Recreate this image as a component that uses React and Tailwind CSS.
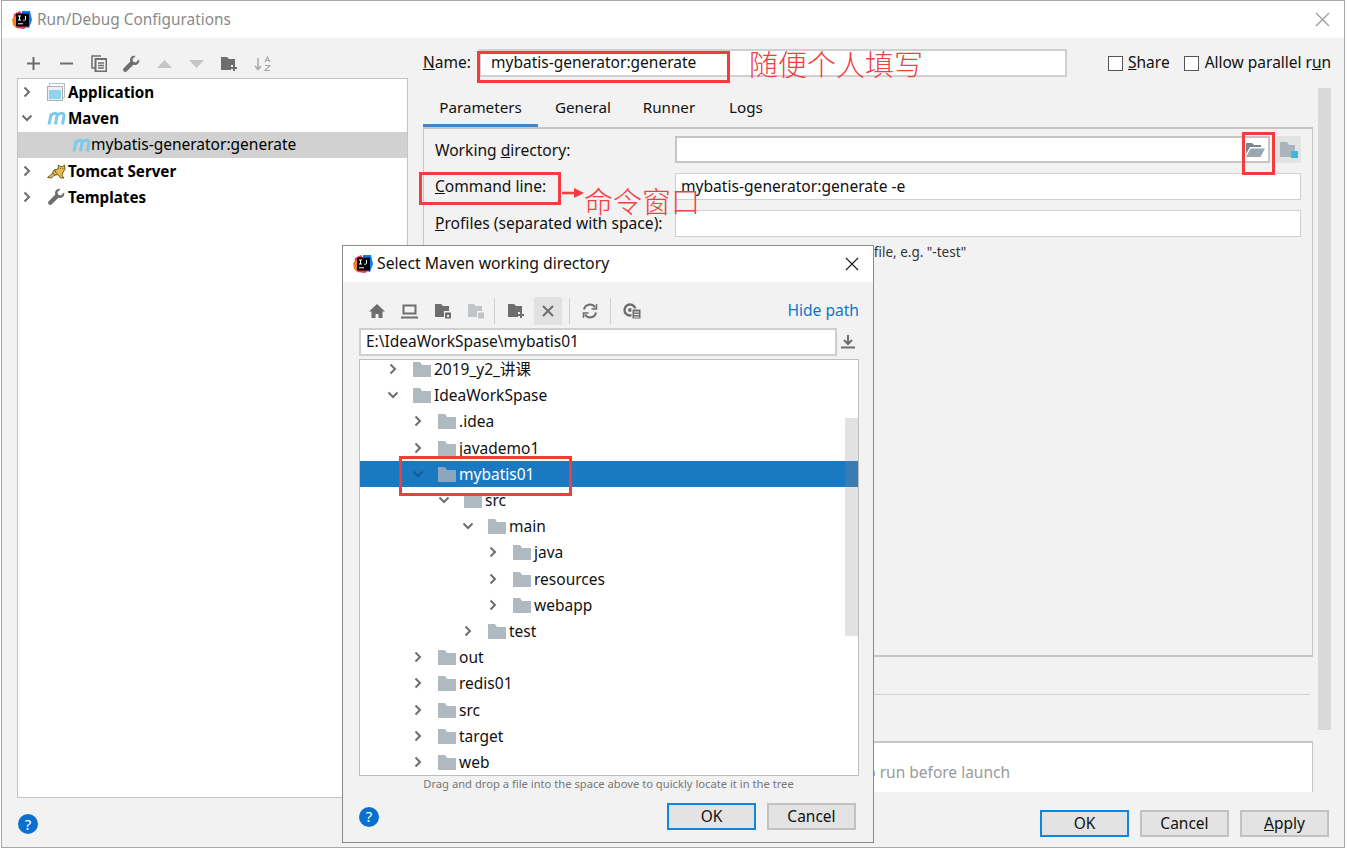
const Chevron = ({ open, color = "#6e6e6e", className = "" }) => (
    <svg width="12" height="12" viewBox="0 0 12 12" fill="none" stroke={color} strokeWidth="2" className={className}>
        {open ? <path d="M1.500 3.500 6 8l4.500-4.500" /> : <path d="M3.500 1.500 8 6l-4.500 4.500" />}
    </svg>
)

const Folder = ({ dim }) => (
    <svg width="18" height="16" viewBox="0 0 18 16" className="shrink-0">
        <path d="M0 1h7l2 3h9v12H0z" fill={dim ? "#8ba6bd" : "#afb9c0"} />
    </svg>
)

const IdeaLogo = () => (
    <svg width="20" height="20" viewBox="0 0 20 20" className="shrink-0">
        <path d="M2 4 8 1l3 5-6 9-4-3z" fill="#f0325f" />
        <path d="M0 9l4-3 3 8-3 4-3-3z" fill="#fc801d" />
        <path d="M10 1h8l2 9-3 8-8-2z" fill="#087cfa" />
        <path d="M4 18l8 1 4-3-6-4z" fill="#f0325f" />
        <rect x="4" y="3.500" width="13" height="13" fill="#000" />
        <path d="M6 6h3M7.500 6v4M6 10h3M13.500 6v3.500q0 .7-.8.7h-1.500M6 13.800h5" stroke="#fff" strokeWidth="1" fill="none" />
    </svg>
)

const MavenIcon = () => (
    <svg width="19" height="14" viewBox="0 0 19 14" fill="none" stroke="#7cc9ea" strokeWidth="3" className="shrink-0">
        <path d="M2 13.500 4.300 2.500M3.800 5C6 1.500 10.500 1.500 10 4.500L8.500 13.500M10 5c2.200-3.500 7.500-3.500 7-.5L15.500 13.500" />
    </svg>
)

const Wrench = ({ size = 18, color = "#6e6e6e" }) => (
    <svg width={size} height={size} viewBox="0 0 18 18" className="shrink-0">
        <path d="M17 4.500 13.800 7.600l-2.600-.8-.8-2.600L13.500 1C10.800.2 8 2.200 8 5c0 .6.100 1.100.3 1.600L1 14l.600 2.400 2.400.6 7.400-7.300c3.600 1.200 7-2.100 5.600-5.700z" fill={color} />
    </svg>
)

const Tomcat = () => (
    <svg width="19" height="15" viewBox="0 0 19 15" className="shrink-0">
        <path d="M.5 13.500 5 10l2-4 4-1 .5-4 2 1.500h2l2-1.500.5 4-2 3.500-1 3 2 2.500h-3.500L11 10.500l-4 1-2.500 2.500z" fill="#e6bb4a" stroke="#4a3c1c" strokeWidth=".8" />
        <path d="M8 6.500l1.500 3M5.500 9.500l2 1M13 4.500h.8M15.500 4.500h.8" stroke="#4a3c1c" strokeWidth=".9" />
    </svg>
)

const HelpIcon = () => (
    <div className="w-5 h-5 rounded-full bg-[#0b6fd0] flex items-center justify-center text-white text-[15px] leading-none">?</div>
)

const Btn = ({ children, primary }) => (
    <button className={`w-[89px] h-[27px] flex items-center justify-center text-[15.500px] text-[#111] bg-[#e3e3e3] border-2 ${primary ? "border-[#0f85dc]" : "border-[#c2c2c2]"}`}>
        {children}
    </button>
)

const RedBox = ({ className }) => (
    <div className={`absolute border-[3px] border-[#f53b3b] ${className}`} />
)

const ToolIcon = ({ children, className = "w-[32.700px]" }) => (
    <span className={`flex justify-center ${className}`}>{children}</span>
)

const configRows = [
    { label: "Application", bold: true },
    { label: "Maven", bold: true, open: true },
    { label: "mybatis-generator:generate", child: true },
    { label: "Tomcat Server", bold: true },
    { label: "Templates", bold: true },
]

const dirRows = [
    { name: "2019_y2_讲课", level: 0 },
    { name: "IdeaWorkSpase", level: 0, open: true },
    { name: ".idea", level: 1 },
    { name: "javademo1", level: 1 },
    { name: "mybatis01", level: 1, open: true, selected: true },
    { name: "src", level: 2, open: true },
    { name: "main", level: 3, open: true },
    { name: "java", level: 4 },
    { name: "resources", level: 4 },
    { name: "webapp", level: 4 },
    { name: "test", level: 3 },
    { name: "out", level: 1 },
    { name: "redis01", level: 1 },
    { name: "src", level: 1 },
    { name: "target", level: 1 },
    { name: "web", level: 1 },
]

const levelPad = ["pl-[27px]", "pl-[52px]", "pl-[78px]", "pl-[102px]", "pl-[127px]"]

function ConfigIcon({ label }) {
    if (label === "Application") {
        return (
            <svg width="18" height="18" viewBox="0 0 18 18" className="shrink-0">
                <rect x="2.500" y=".5" width="15" height="14" fill="none" stroke="#b8bec2" />
                <rect x=".5" y="3.500" width="15" height="14" fill="#eef0f1" stroke="#a8afb4" />
                <rect x="2" y="7" width="12" height="9" fill="#8fd3ef" />
            </svg>
        )
    }
    if (label === "Tomcat Server") return <Tomcat />
    if (label === "Templates") return <Wrench />
    return <MavenIcon />
}

function Dialog() {
    return (
        <div className="absolute left-[342px] top-[245px] w-[532px] h-[598px] bg-[#f2f2f2] border border-[#8a8a8a] flex flex-col">
            <div className="h-[36px] bg-white flex items-center pl-[10px] pr-[14px] pb-[1px] gap-[4px] text-[15.750px] text-[#111]">
                <IdeaLogo />
                <span className="flex-1">Select Maven working directory</span>
                <svg width="14" height="14" viewBox="0 0 14 14" stroke="#222" strokeWidth="1.200"><path d="M1 1l12 12M13 1 1 13" /></svg>
            </div>
            <div className="h-[46px] pt-[12px] pl-[17px] pr-[14px] flex items-center">
                <ToolIcon className="w-[33px]">
                    <svg width="18" height="16" viewBox="0 0 18 16"><path d="M9 1 1 8.500h2.500V15h4v-4h3v4h4V8.500H17z" fill="#6e6e6e" /></svg>
                </ToolIcon>
                <ToolIcon className="w-[33px]">
                    <svg width="17" height="15" viewBox="0 0 17 15" fill="none" stroke="#6e6e6e" strokeWidth="2"><path d="M2.500 1.500h12v8h-12zM0 13.500h17" /></svg>
                </ToolIcon>
                <ToolIcon className="w-[33px]">
                    <svg width="18" height="16" viewBox="0 0 18 16"><path d="M1 1h6l2 2h6v5h-5v6H1z" fill="#6e6e6e" /><path d="M11 9.500h6v6h-6z" fill="#6e6e6e" /><path d="M13 12h2v2h-2z" fill="#f2f2f2" /></svg>
                </ToolIcon>
                <ToolIcon className="w-[33px]">
                    <svg width="18" height="16" viewBox="0 0 18 16"><path d="M1 1h6l2 2h6v5h-5v6H1z" fill="#c2c5c7" /><path d="M11 9.500h6v6h-6z" fill="#c2c5c7" /></svg>
                </ToolIcon>
                <span className="w-px h-[26px] bg-[#cfcfcf] ml-[2px] mr-[3px]" />
                <ToolIcon className="w-[36px]">
                    <svg width="18" height="16" viewBox="0 0 18 16"><path d="M1 1h6l2 2h6v6h-4v5H1z" fill="#6e6e6e" /><path d="M14 9v6M11 12h6" stroke="#6e6e6e" strokeWidth="2" /></svg>
                </ToolIcon>
                <span className="w-[28px] h-[28px] bg-[#e1e1e1] flex items-center justify-center">
                    <svg width="12" height="12" viewBox="0 0 12 12" stroke="#6e6e6e" strokeWidth="2"><path d="M1 1l10 10M11 1 1 11" /></svg>
                </span>
                <span className="w-px h-[26px] bg-[#cfcfcf] ml-[7px]" />
                <ToolIcon className="w-[40px]">
                    <svg width="16" height="16" viewBox="0 0 16 16" fill="none" stroke="#6e6e6e" strokeWidth="2"><path d="M2 6.500A6 6 0 0 1 13 4.500M14 9.500A6 6 0 0 1 3 11.500" /><path d="M14.500 1v5h-5M1.500 15v-5h5" strokeWidth="1.500" /></svg>
                </ToolIcon>
                <span className="w-px h-[26px] bg-[#cfcfcf]" />
                <ToolIcon className="w-[42px]">
                    <svg width="20" height="18" viewBox="0 0 20 18"><circle cx="8" cy="8" r="5.500" fill="none" stroke="#6e6e6e" strokeWidth="2.400" /><circle cx="8" cy="8" r="2" fill="#6e6e6e" /><path d="M10 7h9v10h-9z" fill="#6e6e6e" stroke="#f2f2f2" /><path d="M12 10h5M12 12.500h5M12 15h5" stroke="#f2f2f2" /></svg>
                </ToolIcon>
                <span className="ml-auto text-[15.600px] text-[#0f76c6]">Hide path</span>
            </div>
            <div className="flex items-center pl-[16px] pr-[15px] mt-[-1px] h-[29px]">
                <div className="w-[478px] h-[28px] bg-white border-2 border-[#cfcfcf] flex items-center pl-[5px] text-[15.500px] text-[#111]">E:\IdeaWorkSpase\mybatis01</div>
                <svg width="14" height="15" viewBox="0 0 14 15" className="ml-[4px]"><path d="M7 1v8M3 6l4 4 4-4" fill="none" stroke="#6e6e6e" strokeWidth="2" /><path d="M0 13.500h14" stroke="#6e6e6e" strokeWidth="2" /></svg>
            </div>
            <div className="relative ml-[16px] mt-[3px] w-[500px] h-[417px] bg-white border border-[#bfbfbf] overflow-hidden">
                <div className="mt-[-4px]">
                    {dirRows.map((row) => (
                        <div key={row.name + row.level} className={`h-[26.200px] flex items-center gap-[5px] text-[15.500px] leading-[18px] ${levelPad[row.level]} ${row.selected ? "bg-[#1b79c2] text-white" : "text-[#111]"}`}>
                            <Chevron open={row.open} color={row.selected ? "#165a90" : "#6e6e6e"} className="mr-[9px] shrink-0" />
                            <Folder dim={row.selected} />
                            <span className="ml-[-2px]">{row.name}</span>
                        </div>
                    ))}
                </div>
                <div className="absolute right-0 top-[58px] w-[13px] h-[218px] bg-[#8c8c8c]/25" />
            </div>
            <div className="text-[11.200px] text-[#777] text-center h-[24px] leading-[15px] pl-[1px]">Drag and drop a file into the space above to quickly locate it in the tree</div>
            <div className="flex items-center gap-[11px] pl-[16px] pr-[17px] pt-[3px]">
                <HelpIcon />
                <div className="ml-auto"><Btn primary>OK</Btn></div>
                <Btn>Cancel</Btn>
            </div>
        </div>
    )
}

export default function App() {
    return (
        <div className="relative w-[1348px] h-[850px] bg-white overflow-hidden" style={{ fontFamily: '"Noto Sans", "Noto Sans CJK SC", sans-serif' }}>
            <div className="ml-px w-[1344px] h-[848px] bg-[#f2f2f2] border border-[#a8a8a8] flex flex-col">
                <div className="h-[37px] bg-white flex items-center pl-[10px] pr-[14px] gap-[5px] text-[15.400px] text-[#8a8a8a]">
                    <IdeaLogo />
                    <span className="flex-1">Run/Debug Configurations</span>
                    <svg width="15" height="15" viewBox="0 0 15 15" stroke="#999" strokeWidth="1.200"><path d="M1 1l13 13M14 1 1 14" /></svg>
                </div>
                <div className="flex flex-1">
                    <div className="w-[406px] pl-[15px] flex flex-col">
                        <div className="h-[40px] pt-[11px] flex items-center">
                            <ToolIcon>
                                <svg width="13" height="13" viewBox="0 0 13 13" stroke="#6e6e6e" strokeWidth="2"><path d="M6.500 0v13M0 6.500h13" /></svg>
                            </ToolIcon>
                            <ToolIcon>
                                <svg width="13" height="13" viewBox="0 0 13 13" stroke="#6e6e6e" strokeWidth="2"><path d="M0 6.500h13" /></svg>
                            </ToolIcon>
                            <ToolIcon>
                                <svg width="16" height="17" viewBox="0 0 16 17" fill="none" stroke="#6e6e6e" strokeWidth="1.500"><path d="M10 1H1v12h3" /><path d="M4.500 4h11v12.500h-11z" strokeWidth="2" /><path d="M7 8h6M7 10.500h6M7 13h6" /></svg>
                            </ToolIcon>
                            <ToolIcon><Wrench /></ToolIcon>
                            <ToolIcon>
                                <svg width="15" height="8" viewBox="0 0 15 8"><path d="M7.500 0 15 8H0z" fill="#c2c5c7" /></svg>
                            </ToolIcon>
                            <ToolIcon>
                                <svg width="15" height="8" viewBox="0 0 15 8"><path d="M0 0h15L7.500 8z" fill="#c2c5c7" /></svg>
                            </ToolIcon>
                            <ToolIcon>
                                <svg width="18" height="16" viewBox="0 0 18 16"><path d="M1 1h6l2 2h6v6h-4v5H1z" fill="#6e6e6e" /><path d="M14 9v6M11 12h6" stroke="#6e6e6e" strokeWidth="2" /></svg>
                            </ToolIcon>
                            <ToolIcon>
                                <svg width="17" height="17" viewBox="0 0 17 17" fill="none" stroke="#a6aaad" strokeWidth="1.500"><path d="M4 3v11M1 11l3 3.500L7 11" /><path d="M11 7l2.500-5L16 7M11.500 5.500h4M11 10.500h5L11 15.500h5" strokeWidth="1.200" /></svg>
                            </ToolIcon>
                        </div>
                        <div className="h-[720px] bg-white border border-[#c4c4c4]">
                            {configRows.map((row) => (
                                <div key={row.label} className={`h-[26.300px] flex items-center text-black ${row.child ? "bg-[#d1d1d1] pl-[54px] text-[15.500px]" : "pl-[3px] text-[15.200px]"}`}>
                                    {!row.child && <Chevron open={row.open} className="mr-[14px] shrink-0" />}
                                    <span className={row.child ? "w-[19px]" : "w-[21px]"}><ConfigIcon label={row.label} /></span>
                                    <span className={row.bold ? "font-bold" : ""}>{row.label}</span>
                                </div>
                            ))}
                        </div>
                        <div className="pt-[16px] pl-[1px]"><HelpIcon /></div>
                    </div>
                    <div className="flex-1 pl-[15px] flex flex-col">
                        <div className="h-[50px] flex items-center text-[15.500px] text-[#111]">
                            <span className="w-[56px]"><u>N</u>ame:</span>
                            <div className="w-[588px] h-[28px] bg-white border-2 border-[#d0d0d0] flex items-center pl-[10px]">mybatis-generator:generate</div>
                            <span className="w-[15px] h-[15px] bg-white border border-[#555] ml-[41px] mr-[5px]" />
                            <span><u>S</u>hare</span>
                            <span className="w-[15px] h-[15px] bg-white border border-[#555] ml-[14px] mr-[6px]" />
                            <span>Allow parallel r<u>u</u>n</span>
                        </div>
                        <div className="flex flex-1">
                            <div className="w-[890px] flex flex-col">
                                <div className="h-[39px] flex text-[15.200px] text-[#111]">
                                    <span className="w-[115px] flex items-center justify-center border-b-[3px] border-[#4083c9] pt-[2px]">Parameters</span>
                                    <span className="w-[90px] flex items-center justify-center">General</span>
                                    <span className="w-[82px] flex items-center justify-center">Runner</span>
                                    <span className="w-[72px] flex items-center justify-center">Logs</span>
                                </div>
                                <div className="h-[530px] border border-t-2 border-b-2 border-[#c6c6c6] pl-[11px] pr-[11px] text-[15.600px] text-[#111]">
                                    <div className="flex items-center mt-[7px] h-[27px]">
                                        <span className="w-[240px] pt-[2px]">Working <u>d</u>irectory:</span>
                                        <div className="w-[595px] h-[27px] bg-white border-2 border-[#c6c6c6] flex items-center justify-end pr-[3px]">
                                            <svg width="20" height="16" viewBox="0 0 20 16"><path d="M1 1h6l2 2h7v2H5L1 12z" fill="#7b868e" /><path d="M5.500 6.500H20L15.500 15H1z" fill="#9aa7b0" /></svg>
                                        </div>
                                        <span className="w-[25px] h-[27px] ml-[6px] bg-[#e3e3e3] flex items-center justify-center">
                                            <svg width="20" height="20" viewBox="0 0 20 20"><path d="M1 2h7l2 3h6v12H1z" fill="#a9b5bd" /><rect x="12" y="11" width="7" height="7" fill="#40b6e0" /></svg>
                                        </span>
                                    </div>
                                    <div className="flex items-center mt-[10px] h-[27px]">
                                        <span className="w-[240px]"><u>C</u>ommand line:</span>
                                        <div className="w-[626px] h-[27px] bg-white border border-[#d0d0d0] flex items-center pl-[5px]">mybatis-generator:generate -e</div>
                                    </div>
                                    <div className="flex items-center mt-[10px] h-[27px]">
                                        <span className="w-[240px]"><u>P</u>rofiles (separated with space):</span>
                                        <div className="w-[626px] h-[27px] bg-white border border-[#d0d0d0]" />
                                    </div>
                                    <p className="text-[13.500px] text-[#333] mt-[5px] ml-[226px]">Use prefix '-' to deactivate the profile, e.g. "-test"</p>
                                </div>
                                <div className="h-px bg-[#d0d0d0] mt-[37px] mr-[3px]" />
                                <div className="h-[51px] mt-[46px] pt-[10px] bg-white border-t-2 border-r border-[#c6c6c6] flex items-center justify-end pr-[302px] text-[15.500px] text-[#9a9a9a]">
                                    There are no tasks to run before launch
                                </div>
                            </div>
                            <div className="w-[13px] h-[642px] ml-[5px] bg-[#d9d9d9]" />
                        </div>
                        <div className="flex justify-end gap-[11px] pr-[15px] pb-[10px] mt-[-34px]">
                            <Btn primary>OK</Btn>
                            <Btn>Cancel</Btn>
                            <Btn><span><u>A</u>pply</span></Btn>
                        </div>
                    </div>
                </div>
            </div>

            <Dialog />

            {/* red notes drawn on top of the screenshot */}
            <RedBox className="left-[477px] top-[51px] w-[253px] h-[32px]" />
            <RedBox className="left-[1242px] top-[132px] w-[33px] h-[43px]" />
            <RedBox className="left-[419px] top-[172px] w-[142px] h-[33px]" />
            <RedBox className="left-[399px] top-[456px] w-[173px] h-[40px]" />
            <span className="absolute left-[749px] top-[45px] text-[29px] leading-[40px] text-[#f04040] font-light">随便个人填写</span>
            <span className="absolute left-[584px] top-[182px] text-[29px] leading-[40px] text-[#f04040] font-light">命令窗口</span>
            <svg width="24" height="10" viewBox="0 0 24 10" className="absolute left-[561px] top-[188px]">
                <path d="M1 5h14" stroke="#f53b3b" strokeWidth="2.500" />
                <path d="M13 0l10 5-10 5z" fill="#f53b3b" />
            </svg>
        </div>
    )
}
